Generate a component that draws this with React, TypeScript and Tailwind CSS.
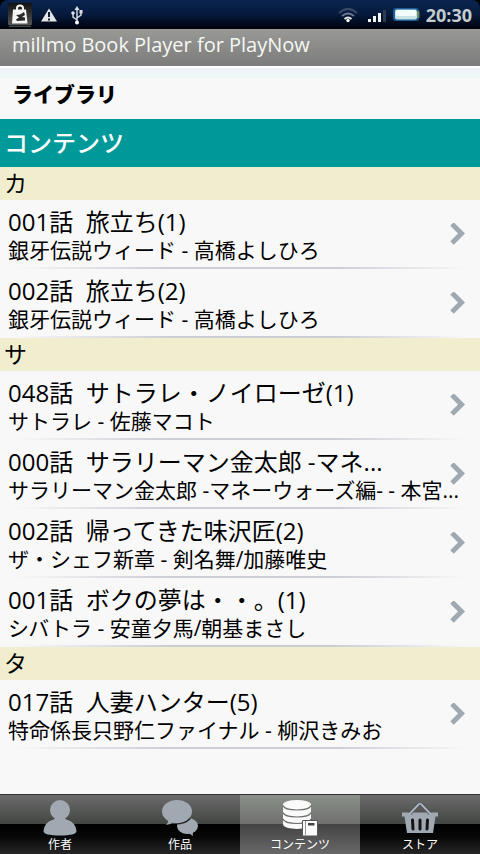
import React from 'react';

type Item = { title: string; detail: string };
type Section = { heading: string; items: Item[] };

const sections: Section[] = [
  {
    heading: 'カ',
    items: [
      { title: '001話  旅立ち(1)', detail: '銀牙伝説ウィード - 高橋よしひろ' },
      { title: '002話  旅立ち(2)', detail: '銀牙伝説ウィード - 高橋よしひろ' },
    ],
  },
  {
    heading: 'サ',
    items: [
      { title: '048話  サトラレ・ノイローゼ(1)', detail: 'サトラレ - 佐藤マコト' },
      { title: '000話  サラリーマン金太郎 -マネ...', detail: 'サラリーマン金太郎 -マネーウォーズ編- - 本宮...' },
      { title: '002話  帰ってきた味沢匠(2)', detail: 'ザ・シェフ新章 - 剣名舞/加藤唯史' },
      { title: '001話  ボクの夢は・・。(1)', detail: 'シバトラ - 安童夕馬/朝基まさし' },
    ],
  },
  {
    heading: 'タ',
    items: [{ title: '017話  人妻ハンター(5)', detail: '特命係長只野仁ファイナル - 柳沢きみお' }],
  },
];

const StatusBar = () => (
  <div className="bg-black">
    <div className="flex h-[29px] items-center rounded-t-lg bg-linear-to-b from-[#0a2550] via-[#061a3c] to-[#00040c] px-2">
      <svg width="24" height="26" viewBox="0 0 24 26" aria-hidden="true">
        <defs>
          <linearGradient id="tile" x1="0" y1="0" x2="0" y2="1">
            <stop offset="0" stopColor="#111" />
            <stop offset="1" stopColor="#555" />
          </linearGradient>
        </defs>
        <rect width="24" height="22" y="1" rx="1" fill="url(#tile)" />
        <rect x="1" y="23.500" width="22" height="1.500" fill="#444" />
        <path d="M9 8V6q0-2.500 3-2.500t3 2.500V8" fill="none" stroke="#f4f4f4" strokeWidth="2" />
        <path d="M5 7.500h13l1.500 14H4z" fill="#f4f4f4" />
        <path d="M8 13l4-.5 4-2.500 1 3-3 2 3 .5v3l-8 .5-1-1.500 3-2z" fill="#2a2a2a" />
      </svg>
      <svg className="ml-2" width="18" height="16" viewBox="0 0 18 16" aria-hidden="true">
        <path d="M9 1.500l8 13H1z" fill="#e4e6e8" />
        <path d="M9 5v5M9 11.500v2" stroke="#0a1c38" strokeWidth="2" />
      </svg>
      <svg className="ml-3" width="14" height="20" viewBox="0 0 14 20" aria-hidden="true">
        <path d="M7 3v14M7 15L3 12V8M7 13l4-3V6" fill="none" stroke="#d0d4d8" strokeWidth="1.500" />
        <path d="M7 1l2.500 4h-5z" fill="#dde0e4" />
        <circle cx="3" cy="8" r="1.800" fill="#dde0e4" />
        <rect x="9.500" y="5" width="3" height="3.500" fill="#dde0e4" />
        <circle cx="7" cy="17.500" r="2" fill="#fff" />
      </svg>
      <div className="ml-auto flex items-center">
        <svg className="mr-0.5" width="20" height="16" viewBox="0 0 20 16" fill="none" aria-hidden="true">
          <path d="M1 6q9-8 18 0" stroke="#3c4c66" strokeWidth="1.800" />
          <path d="M4 9q6-5 12 0" stroke="#6c7a8e" strokeWidth="1.800" />
          <path d="M6.500 12q3.500-3 7 0" stroke="#e8ebee" strokeWidth="1.800" />
          <circle cx="10" cy="13.500" r="1.700" fill="#fff" />
        </svg>
        <svg className="ml-2" width="20" height="14" viewBox="0 0 20 14" aria-hidden="true">
          <path d="M0 11h3v3H0zM5 8h3v6H5zM10 5h3v9h-3z" fill="#f4f6f8" />
          <path d="M15 2h3v12h-3z" fill="#2c3a52" />
        </svg>
        <svg className="ml-1" width="30" height="18" viewBox="0 0 30 18" aria-hidden="true">
          <rect x="1" y="2" width="26" height="13" rx="3" fill="#1d5c98" />
          <rect x="25" y="5" width="2.500" height="7" rx="1" fill="#6d8c64" />
          <rect x="3" y="3.500" width="22" height="10" rx="2" fill="#c6e4e6" />
          <rect x="4" y="4" width="20" height="6" rx="1" fill="#f2fcfa" />
        </svg>
        <span className="ml-1 font-['Open_Sans'] text-lg font-bold text-[#c4ccd0]">20:30</span>
      </div>
    </div>
  </div>
);

const Row = ({ title, detail }: Item) => (
  <li>
    <button type="button" className="relative block w-full text-left">
      <span className="flex h-[67px] flex-col pt-1.5 pl-2">
        <span className="block whitespace-pre text-2xl leading-8">{title}</span>
        <span className="block whitespace-pre text-[21px] leading-6">{detail}</span>
      </span>
      <svg
        className="absolute inset-y-0 right-3 my-auto"
        width="20"
        height="24"
        viewBox="0 0 20 24"
        aria-hidden="true"
      >
        <path d="M4 1L13.500 10.500L4 20" fill="none" stroke="#a0a9b1" strokeWidth="5" />
      </svg>
      <span className="block h-0.5 bg-[linear-gradient(to_right,transparent_3%,#ccced6_35%,#ccced6_70%,transparent_97%)]" />
    </button>
  </li>
);

const AuthorIcon = () => (
  <svg width="36" height="38" viewBox="0 0 36 38" fill="#a0a9b1" aria-hidden="true">
    <ellipse cx="18" cy="11" rx="10" ry="10" />
    <path d="M13 18h10q0 2.500 3 3q8 3 8.500 11q0 4.500-16.500 4.500t-16.500-4.500q.5-8 8.500-11q3-.5 3-3z" />
  </svg>
);

const WorksIcon = () => (
  <svg width="38" height="38" viewBox="0 0 38 38" fill="#a0a9b1" aria-hidden="true">
    <defs>
      <clipPath id="reply">
        <ellipse cx="26.500" cy="27" rx="10.500" ry="8" />
      </clipPath>
    </defs>
    <ellipse cx="26.500" cy="27" rx="10.500" ry="8" />
    <path d="M26 33l6 4-.5-5z" />
    <ellipse cx="16" cy="12.500" rx="16.500" ry="13" fill="#222" clipPath="url(#reply)" />
    <ellipse cx="16" cy="12.500" rx="15" ry="11.500" />
    <path d="M7 20q1 3-2 6q5-.5 8-3.500z" />
  </svg>
);

const ContentsIcon = () => (
  <svg width="38" height="38" viewBox="0 0 38 38" aria-hidden="true">
    <path d="M2 5.500v19.500c0 6.500 28 6.500 28 0v-19.500z" fill="#fafafa" />
    <ellipse cx="16" cy="5.500" rx="14" ry="4.500" fill="#fafafa" />
    <path
      d="M2 6.500c2 6 26 6 28 0M2 13.500c2 6 26 6 28 0M2 20c2 6 26 6 28 0"
      fill="none"
      stroke="#6a6c6a"
      strokeWidth="1.200"
    />
    <path d="M21.500 21.500h15v15.500h-15z" fill="#fafafa" stroke="#555" />
    <path d="M24.500 22v14.500" stroke="#999" />
    <path d="M27 24h6.500v2.500h-6.500z" fill="#444" />
  </svg>
);

const StoreIcon = () => (
  <svg width="38" height="38" viewBox="0 0 38 38" aria-hidden="true">
    <path d="M1 13.500h36v4h-2.500l-2.500 16.500H6l-2.500-16.500H1z" fill="#a0a9b1" />
    <path d="M9 14.500L18 5M20 5l9 9.500" stroke="#4a4e4c" strokeWidth="3.500" />
    <path d="M9 14.500L18 5M20 5l9 9.500" stroke="#a9b2c2" strokeWidth="2" strokeLinecap="round" />
    <path d="M11.500 21l.5 9M19 21v9M26.500 21l-.5 9" stroke="#151515" strokeWidth="3" strokeLinecap="round" />
  </svg>
);

const tabs = [
  { label: '作者', Icon: AuthorIcon, active: false },
  { label: '作品', Icon: WorksIcon, active: false },
  { label: 'コンテンツ', Icon: ContentsIcon, active: true },
  { label: 'ストア', Icon: StoreIcon, active: false },
];

export default function App() {
  return (
    <div className="flex min-h-screen flex-col bg-[#f8f8f8] font-['Open_Sans','Noto_Sans_CJK_JP',sans-serif] text-black">
      <StatusBar />
      <div className="h-[37px] bg-linear-to-b from-[#999a96] to-[#7b7b7b] px-3 text-xl leading-8 text-[#f6f8f4]">
        millmo Book Player for PlayNow
      </div>

      <header className="flex h-[53px] items-center bg-[linear-gradient(#fff_2px,#f0f0f8_2px,#f0f0f8_5px,#eef7f8_5px,#eef7f8_12px,#f8f8f8_12px)] px-3 pt-1">
        <h1 className="text-[21px] font-black">ライブラリ</h1>
      </header>

      <main>
        <h2 className="bg-[#009999] px-1 py-2 text-2xl leading-8 font-medium text-white">コンテンツ</h2>
        {sections.map((section) => (
          <section key={section.heading}>
            <h3 className="h-[33px] bg-[#f0eecf] px-1 text-[23px] leading-8">{section.heading}</h3>
            <ul>
              {section.items.map((item) => (
                <Row key={item.title} {...item} />
              ))}
            </ul>
          </section>
        ))}
      </main>

      <nav className="mt-auto grid grid-cols-4 border-t border-[#333]">
        {tabs.map(({ label, Icon, active }) => (
          <button
            key={label}
            type="button"
            className={
              active
                ? 'flex h-[59px] flex-col items-center bg-[linear-gradient(#8b9089,#6f706f_49%,#434343_49%,#686868)] pt-1 text-white'
                : 'flex h-[59px] flex-col items-center bg-[linear-gradient(#6b6b6b,#424642_49%,#000_49%,#060606_70%,#262626)] pt-1 text-white'
            }
          >
            <Icon />
            <span className="text-xs leading-4">{label}</span>
          </button>
        ))}
      </nav>
    </div>
  );
}
